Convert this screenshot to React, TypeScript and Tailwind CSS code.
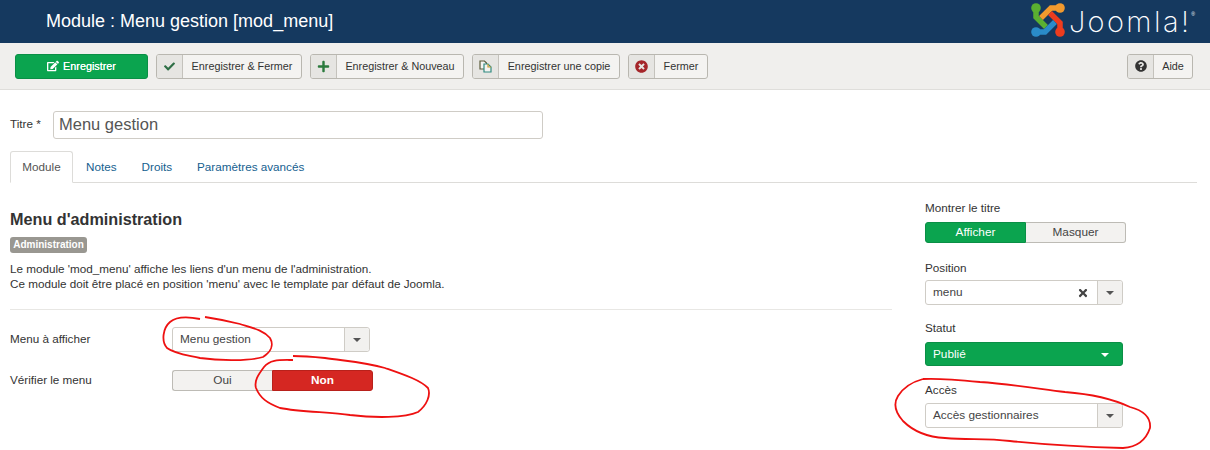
import type { ReactNode } from "react";
import { FaCheck, FaEdit, FaPlus, FaQuestionCircle, FaTimes, FaTimesCircle } from "react-icons/fa";

function ToolButton({ icon, label, textWidth }: { icon: ReactNode; label: string; textWidth: string }) {
  return (
    <button className="flex h-[25px] items-stretch overflow-hidden rounded-[3px] border border-[#b9b7b0] bg-[#f4f3f1] text-[10.8px] text-[#333]">
      <span className="flex w-[26px] items-center justify-center border-r border-[#c4c2bc] bg-[#e6e5e2]">{icon}</span>
      <span className={`flex items-center justify-center ${textWidth}`}>{label}</span>
    </button>
  );
}

function Caret({ className }: { className: string }) {
  return <span className={`h-0 w-0 border-x-[4px] border-t-[4px] border-x-transparent ${className}`} />;
}

function SelectBox({ value, clear, width }: { value: string; clear?: boolean; width: string }) {
  return (
    <div className={`flex h-[25px] items-stretch rounded-[3px] border border-[#cfccc6] bg-white text-[11.8px] text-[#444] ${width}`}>
      <span className="flex flex-1 items-center justify-between pl-[7px] pr-[8px] pt-px">
        {value}
        {clear && <FaTimes className="text-[12px] text-[#444]" />}
      </span>
      <span className="flex w-[25px] items-center justify-center rounded-r-[3px] border-l border-[#cfccc6] bg-[#f2f1ef]">
        <Caret className="border-t-[#555]" />
      </span>
    </div>
  );
}

function Toggle({ left, right, active, leftWidth }: { left: string; right: string; active: "left" | "right"; leftWidth: string }) {
  const off = "bg-[#f3f2f0] text-[#444] border-[#bdbbb5]";
  return (
    <div className="flex h-[21px] w-[201px] text-[11.8px]">
      <span
        className={`flex items-center justify-center rounded-l-[3px] border pt-px ${leftWidth} ${
          active === "left" ? "border-[#0a8f46] bg-[#0ba44f] text-white" : `${off} border-r-0`
        }`}
      >
        {left}
      </span>
      <span
        className={`flex flex-1 items-center justify-center rounded-r-[3px] border pt-px ${
          active === "right" ? "border-[#b8211b] bg-[#d52722] font-bold text-white" : `${off} border-l-0`
        }`}
      >
        {right}
      </span>
    </div>
  );
}

function CopyIcon() {
  return (
    <svg width="13" height="13" viewBox="0 0 13 13" fill="none" strokeWidth="1.2">
      <path d="M1 1 H5.5 L7.5 3 V9 H1 Z" stroke="#5a5a3a" fill="#f4f3f1" />
      <path d="M5 4 H9 L12 7 V12 H5 Z" stroke="#2f8a80" fill="#f4f3f1" />
      <path d="M9 4 V7 H12" stroke="#c99a2e" />
    </svg>
  );
}

function JoomlaLogo() {
  return (
    <svg className="-mt-[3px]" width="34" height="34" viewBox="0 0 34 34" fill="none" strokeWidth="5.5">
      <path d="M5 5 L5 14 L15 24" stroke="#5ab031" />
      <circle cx="5" cy="5" r="4.8" fill="#5ab031" />
      <path d="M29 5 L20 5 L10 15" stroke="#f29a2e" />
      <circle cx="29" cy="5" r="4.8" fill="#f29a2e" />
      <path d="M29 29 L29 20 L19 10" stroke="#ee3c1e" />
      <circle cx="29" cy="29" r="4.8" fill="#ee3c1e" />
      <path d="M5 29 L14 29 L24 19" stroke="#2a8bc9" />
      <circle cx="5" cy="29" r="4.8" fill="#2a8bc9" />
    </svg>
  );
}

export default function App() {
  return (
    <div className="relative h-[450px] w-[1210px] overflow-hidden bg-white font-['Liberation_Sans',Arial,sans-serif] text-[11.7px] text-[#333]">
      <header className="flex h-[43px] items-center justify-between bg-[#15395f] pl-[46px] pr-[15px]">
        <h1 className="text-[18px] text-white">Module : Menu gestion [mod_menu]</h1>
        <div className="flex items-center gap-[4px]">
          <JoomlaLogo />
          <span className="font-['Inter',sans-serif] text-[29px] font-extralight leading-none tracking-[2.4px] text-white">Joomla!</span>
          <span className="-ml-[4px] -mt-[14px] text-[5px] text-white">®</span>
        </div>
      </header>

      <div className="flex h-[47px] items-center gap-[8px] border-b border-[#dfdedb] bg-[#f0efed] px-[15px]">
        <button className="flex h-[25px] w-[133px] items-center justify-center gap-[4px] rounded-[3px] border border-[#0a8f46] bg-[#0ba44f] text-[10.8px] text-white [text-shadow:0_0_0.6px_white]">
          <FaEdit className="text-[12px]" />
          Enregistrer
        </button>
        <ToolButton icon={<FaCheck className="text-[11px] text-[#2f6f46]" />} label="Enregistrer & Fermer" textWidth="w-[118px]" />
        <ToolButton icon={<FaPlus className="text-[13px] text-[#2b7a3d]" />} label="Enregistrer & Nouveau" textWidth="w-[126px]" />
        <ToolButton icon={<CopyIcon />} label="Enregistrer une copie" textWidth="w-[120px]" />
        <ToolButton icon={<FaTimesCircle className="text-[13px] text-[#a5262a]" />} label="Fermer" textWidth="w-[52px]" />
        <div className="ml-auto mr-[2px]">
          <ToolButton icon={<FaQuestionCircle className="text-[12px] text-[#333]" />} label="Aide" textWidth="w-[38px]" />
        </div>
      </div>

      <div className="mt-[21px] flex items-center pl-[10px]">
        <label className="-mt-[2px] w-[43px]">Titre *</label>
        <div className="flex h-[28px] w-[490px] items-center rounded-[3px] border border-[#cfccc6] pb-px pl-[5px] text-[16.5px] text-[#555]">
          Menu gestion
        </div>
      </div>

      <nav className="ml-[10px] mr-[13px] mt-[12px] flex h-[32px] items-end border-b border-[#dddcd9] text-[#15608f]">
        <span className="-mb-px flex h-[32px] w-[63px] items-center justify-center rounded-t-[3px] border border-b-white border-[#dddcd9] bg-white text-[#555]">
          Module
        </span>
        <span className="flex h-[31px] items-center pl-[13px]">Notes</span>
        <span className="flex h-[31px] items-center pl-[25px]">Droits</span>
        <span className="flex h-[31px] items-center pl-[25px]">Paramètres avancés</span>
      </nav>

      <div className="flex pl-[10px]">
        <section className="w-[882px]">
          <h2 className="mt-[26px] text-[16.2px] font-bold leading-[20px] text-[#333]">Menu d'administration</h2>
          <span className="mt-[8px] block h-[16px] w-[77px] rounded-[3px] bg-[#999791] text-center text-[10px] font-bold leading-[15px] text-white">
            Administration
          </span>
          <p className="mt-[8px] leading-[15px]">
            Le module 'mod_menu' affiche les liens d'un menu de l'administration.
            <br />
            Ce module doit être placé en position 'menu' avec le template par défaut de Joomla.
          </p>
          <hr className="mt-[18px] border-[#e8e7e4]" />
          <div className="mt-[17px] flex items-center">
            <label className="-mt-[2px] w-[162px]">Menu à afficher</label>
            <SelectBox value="Menu gestion" width="w-[198px]" />
          </div>
          <div className="mt-[18px] flex items-center">
            <label className="-mt-[2px] w-[162px]">Vérifier le menu</label>
            <Toggle left="Oui" right="Non" active="right" leftWidth="w-[100px]" />
          </div>
        </section>

        <aside className="ml-[33px] w-[201px] pt-[17px]">
          <label className="block leading-[15px]">Montrer le titre</label>
          <div className="mt-[7px]">
            <Toggle left="Afficher" right="Masquer" active="left" leftWidth="w-[101px]" />
          </div>
          <label className="mt-[17px] block leading-[15px]">Position</label>
          <div className="mt-[5px]">
            <SelectBox value="menu" clear width="w-[198px]" />
          </div>
          <label className="mt-[15px] block leading-[15px]">Statut</label>
          <div className="mt-[7px] flex h-[24px] w-[198px] items-center justify-between rounded-[3px] border border-[#0a8f46] bg-[#0ba44f] pl-[7px] pr-[13px] pt-px text-[11.8px] text-white">
            Publié
            <Caret className="border-t-white" />
          </div>
          <label className="mt-[16px] block leading-[15px]">Accès</label>
          <div className="mt-[6px]">
            <SelectBox value="Accès gestionnaires" width="w-[198px]" />
          </div>
        </aside>
      </div>

      {/* hand-drawn red marks over the screenshot */}
      <svg className="pointer-events-none absolute left-0 top-0" width="1210" height="450" fill="none" stroke="#ee1111" strokeWidth="1.8">
        <path d="M200 319 C190 317 177 316 170 322 C163 328 161 341 167 348 C175 354 187 355 200 358 C220 361 250 361 263 357 C271 352 274 345 270 338 C263 330 253 328 240 324 C228 321 218 319 205 317" />
        <path d="M293 360 C280 360 270 359 264 367 C258 375 254 381 256 388 C260 398 267 403 280 408 C300 412 330 412 350 415 C375 418 405 418 418 412 C427 405 431 395 428 388 C420 380 405 375 385 368 C365 362 345 361 325 358 C315 357 305 356 293 356" />
        <path d="M923 379 C912 382 903 388 898 396 C893 404 895 412 903 421 C912 430 925 437 945 438 C970 440 985 438 1010 441 C1040 444 1085 447 1123 448 C1138 447 1146 440 1150 428 C1151 418 1145 411 1130 407 C1115 400 1090 394 1065 392 C1040 389 1010 384 980 382 C960 380 940 378 923 379" />
      </svg>
    </div>
  );
}
